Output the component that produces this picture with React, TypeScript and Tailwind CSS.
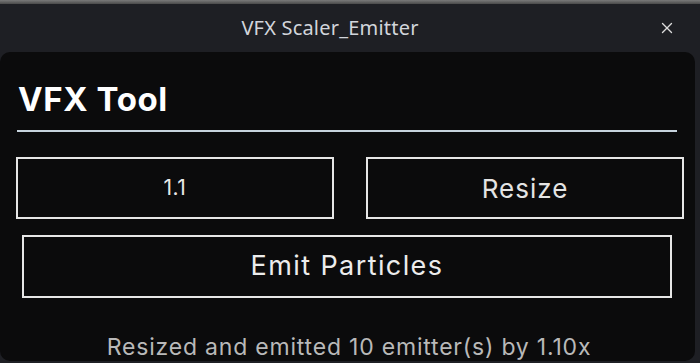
import { X } from "lucide-react";

export default function App() {
    return (
        <div className="w-[700px] h-[363px] bg-[#1e1f24] flex flex-col overflow-hidden">
            {/* window chrome */}
            <div className="h-[4px] bg-gradient-to-b from-[#7a7a7a] to-[#4a4a4a]" />
            <div
                className="relative h-[48px] pr-[40px] flex items-center justify-center text-[#d2d5db] text-[20px]"
                style={{ fontFamily: '"Noto Sans", "DejaVu Sans", sans-serif' }}
            >
                <span className="tracking-[0.2px]">VFX Scaler_Emitter</span>
                <X className="absolute right-[24px] top-[15px] w-[18px] h-[18px] text-[#dcdcdc]" strokeWidth={1.8} />
            </div>

            {/* tool panel */}
            <div
                className="w-[695px] h-[309px] bg-[#0b0b0c] rounded-[10px] pl-[16px] flex flex-col"
                style={{ fontFamily: 'Inter, "Open Sans", sans-serif' }}
            >
                <div className="pt-[31px] pl-[2px] text-[33px] leading-[33px] font-bold text-white tracking-[0.6px]">
                    VFX Tool
                </div>
                <div className="mt-[14px] ml-[1px] w-[660px] h-[2px] bg-[#c7d4de]" />

                <div className="mt-[25px] flex gap-[32px]">
                    <div className="w-[318px] h-[62px] border-2 border-[#e6e6e6] flex items-center justify-center text-[21px] tracking-[0.5px] text-[#e8e8e8]">
                        1.1
                    </div>
                    <button className="w-[318px] h-[62px] border-2 border-[#e6e6e6] flex items-center justify-center text-[26px] tracking-[1px] text-[#e4e4e4]">
                        Resize
                    </button>
                </div>

                <button className="mt-[16px] ml-[6px] w-[650px] h-[63px] border-2 border-[#e6e6e6] flex items-center justify-center text-[27px] tracking-[1.4px] text-[#ececec]">
                    Emit Particles
                </button>

                <div className="mt-[36px] w-[666px] text-center text-[23px] leading-[26px] tracking-[0.8px] text-[#b9b9b9]">
                    Resized and emitted 10 emitter(s) by 1.10x
                </div>
            </div>
        </div>
    );
}
